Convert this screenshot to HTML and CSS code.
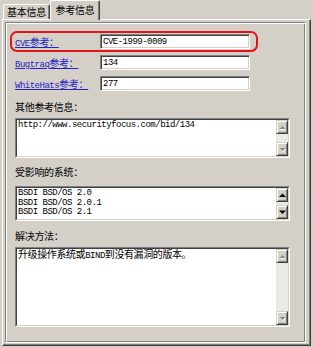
FILE: index.html
```html
<!DOCTYPE html>
<html>
<head>
<meta charset="utf-8">
<link rel="stylesheet" href="styles.css">
</head>
<body>
<div class="win">
  <div class="tabs">
    <div class="tab">基本信息</div>
    <div class="tab active">参考信息</div>
  </div>
  <div class="panel">
    <div class="frame">
      <div class="row hl">
        <a class="lbl"><span class="lat">CVE</span>参考：</a>
        <div class="input">CVE-1999-0009</div>
      </div>
      <div class="row">
        <a class="lbl"><span class="lat">Bugtraq</span>参考：</a>
        <div class="input">134</div>
      </div>
      <div class="row">
        <a class="lbl"><span class="lat">WhiteHats</span>参考：</a>
        <div class="input">277</div>
      </div>

      <div class="cap cap1">其他参考信息：</div>
      <div class="box box1">
        <div class="box-in">
          <div class="txt mono">http://www.securityfocus.com/bid/134</div>
          <div class="sb">
            <div class="btn off"><svg width="7" height="5" viewBox="0 0 7 5"><polygon points="4,2 7,5 1,5" fill="#fff"/><polygon points="3.5,1 6.5,4 0.5,4" fill="#8a8a8a"/></svg></div>
            <div class="track"></div>
            <div class="btn off"><svg width="7" height="5" viewBox="0 0 7 5"><polygon points="1,2 7,2 4,5" fill="#fff"/><polygon points="0.5,1 6.5,1 3.5,4" fill="#8a8a8a"/></svg></div>
          </div>
        </div>
      </div>

      <div class="cap cap2">受影响的系统：</div>
      <div class="box box2">
        <div class="box-in">
          <div class="txt mono">BSDI BSD/OS 2.0
BSDI BSD/OS 2.0.1
BSDI BSD/OS 2.1</div>
          <div class="sb">
            <div class="btn"><svg width="7" height="5" viewBox="0 0 7 5"><polygon points="3.5,0.5 7,4 0,4" fill="#000"/></svg></div>
            <div class="track"></div>
            <div class="btn"><svg width="7" height="5" viewBox="0 0 7 5"><polygon points="0,0.5 7,0.5 3.5,4" fill="#000"/></svg></div>
          </div>
        </div>
      </div>

      <div class="cap cap3">解决方法：</div>
      <div class="box box3">
        <div class="box-in">
          <div class="txt cjk">升级操作系统或<span class="lat">BIND</span>到没有漏洞的版本。</div>
          <div class="sb">
            <div class="btn off"><svg width="7" height="5" viewBox="0 0 7 5"><polygon points="4,2 7,5 1,5" fill="#fff"/><polygon points="3.5,1 6.5,4 0.5,4" fill="#8a8a8a"/></svg></div>
            <div class="track"></div>
            <div class="btn off"><svg width="7" height="5" viewBox="0 0 7 5"><polygon points="1,2 7,2 4,5" fill="#fff"/><polygon points="0.5,1 6.5,1 3.5,4" fill="#8a8a8a"/></svg></div>
          </div>
        </div>
      </div>
    </div>
  </div>
</div>
</body>
</html>
```
FILE: styles.css
```css
* { box-sizing: border-box; }

body {
  margin: 0;
  background: #d4d0c8;
  font-family: "Noto Sans CJK SC", sans-serif;
  font-size: 10px;
  color: #000;
}

.win { width: 313px; height: 347px; }

.tabs {
  display: flex;
  align-items: flex-end;
  height: 19px;
  padding-left: 3px;
}

.tab {
  width: 47px;
  height: 15px;
  border-top: 1px solid #fff;
  border-left: 1px solid #fff;
  border-right: 1px solid #404040;
  border-radius: 2px 2px 0 0;
  box-shadow: inset -1px 0 0 #808080;
  display: flex;
  align-items: center;
  justify-content: center;
  letter-spacing: -0.3px;
  line-height: 1;
}

.tab.active {
  width: 50px;
  height: 20px;
  margin-bottom: -1px;
  padding-bottom: 2px;
  background: #d4d0c8;
  position: relative;
  z-index: 1;
}

.panel {
  margin-left: 2px;
  width: 309px;
  height: 327px;
  border-top: 1px solid #fff;
  border-left: 1px solid #fff;
  border-right: 1px solid #404040;
  border-bottom: 1px solid #404040;
  box-shadow: inset -1px -1px 0 #808080;
  padding: 2px 2px 1px 2px;
}

.frame {
  width: 301px;
  height: 321px;
  border: 1px solid;
  border-color: #808080 #fff #fff #808080;
  box-shadow: inset 1px 1px 0 #fff, inset -1px -1px 0 #808080;
  padding: 8px 0 0 4px;
}

.row {
  display: flex;
  align-items: center;
  width: 248px;
  height: 21px;
  border: 2px solid transparent;
  border-radius: 7px;
  padding-left: 3px;
}

.row.hl { border-color: #e1141c; }

.lbl {
  width: 85px;
  color: #2424c8;
  text-decoration: underline;
  letter-spacing: -0.3px;
  white-space: nowrap;
}

.lat {
  font-family: "Liberation Mono", monospace;
  font-size: 9px;
  letter-spacing: -0.5px;
}

.input {
  width: 150px;
  height: 15px;
  background: #fff;
  border: 1px solid;
  border-color: #808080 #fff #fff #808080;
  box-shadow: inset 1px 1px 0 #404040, inset -1px -1px 0 #d4d0c8;
  padding: 1px 0 0 2px;
  font-family: "Liberation Mono", monospace;
  font-size: 9px;
  letter-spacing: -0.5px;
  line-height: 12px;
}

.cap {
  margin-left: 5px;
  height: 14px;
  line-height: 14px;
  letter-spacing: -0.3px;
}
.cap1 { margin-top: 6px; }
.cap2 { margin-top: 7px; }
.cap3 { margin-top: 8px; }

.box {
  margin-left: 5px;
  width: 275px;
  display: flex;
  border: 1px solid;
  border-color: #808080 #fff #fff #808080;
}
.box1 { margin-top: 4px; height: 40px; }
.box2 { margin-top: 7px; height: 35px; }
.box3 { margin-top: 4px; height: 80px; }

.box-in {
  flex: 1;
  display: flex;
  background: #fff;
  border: 1px solid;
  border-color: #404040 #d4d0c8 #d4d0c8 #404040;
}

.txt {
  flex: 1;
  white-space: pre;
  padding-left: 1px;
}

.mono {
  font-family: "Liberation Mono", monospace;
  font-size: 9px;
  letter-spacing: -0.5px;
  line-height: 9.5px;
  padding-top: 1px;
}

.cjk {
  font-size: 10px;
  letter-spacing: -0.4px;
  line-height: 12px;
  margin-top: -1px;
}

.sb {
  width: 12px;
  display: flex;
  flex-direction: column;
  background: #ebe9e3;
}

.btn {
  height: 14px;
  background: #d4d0c8;
  border: 1px solid;
  border-color: #d4d0c8 #404040 #404040 #d4d0c8;
  box-shadow: inset 1px 1px 0 #fff, inset -1px -1px 0 #808080;
  display: flex;
  align-items: center;
  justify-content: center;
}

.btn svg { display: block; }

.track { flex: 1; }
```
